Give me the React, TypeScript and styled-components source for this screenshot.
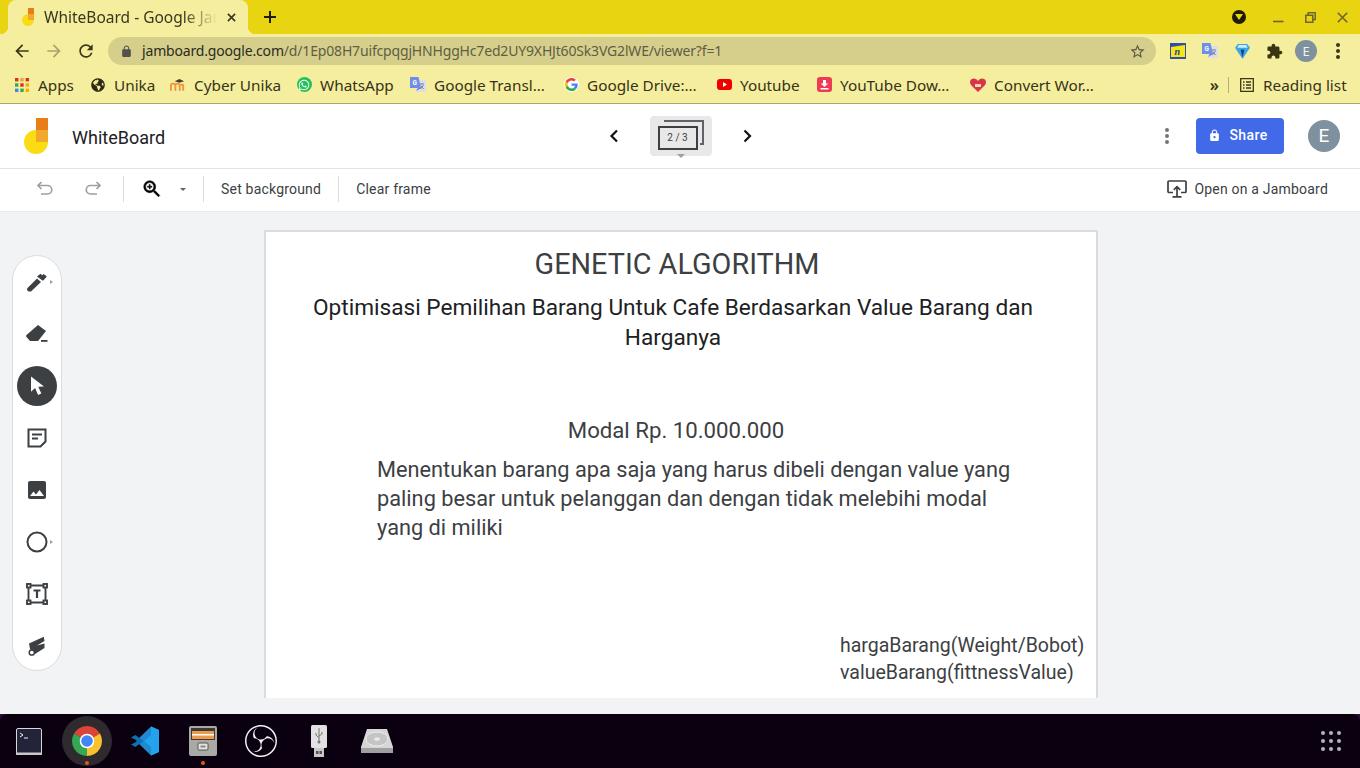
import React from 'react'
import styled, { createGlobalStyle } from 'styled-components'
import { FaGlobeAmericas, FaWhatsapp } from 'react-icons/fa'
import { SiObsstudio } from 'react-icons/si'

const GlobalStyle = createGlobalStyle`
  html, body { margin: 0; padding: 0; background: #f1f3f4; }
  body { width: 1360px; height: 768px; overflow: hidden; font-family: Roboto, "Liberation Sans", sans-serif; }
`

const CHROME_FONT = `"Noto Sans", "Open Sans", sans-serif`

const bookmarks = [
  { label: 'Apps', width: 36, icon: <AppsIcon /> },
  { label: 'Unika', width: 40, icon: <FaGlobeAmericas size={14} color="#2e2a14" /> },
  { label: 'Cyber Unika', width: 86, icon: <MoodleIcon /> },
  { label: 'WhatsApp', width: 74, icon: <WhatsappIcon /> },
  { label: 'Google Transl…', width: 113, icon: <TranslateIcon size={16} /> },
  { label: 'Google Drive:…', width: 113, icon: <GoogleIcon /> },
  { label: 'Youtube', width: 60, icon: <YoutubeIcon /> },
  { label: 'YouTube Dow…', width: 114, icon: <DownloadIcon /> },
  { label: 'Convert Wor…', width: 106, icon: <GiftIcon /> },
]

export default function App() {
  return (
    <Page>
      <GlobalStyle />
      <TabStrip>
        <Tab>
          <JamLogo size={12} />
          <TabTitle>WhiteBoard - Google Jamboard</TabTitle>
          <TabClose viewBox="0 0 10 10"><path d="M1 1l8 8M9 1l-8 8" /></TabClose>
        </Tab>
        <NewTab viewBox="0 0 12 12"><path d="M6 0v12M0 6h12" /></NewTab>
        <WindowControls>
          <ProfileDot><svg width="8" height="6" viewBox="0 0 8 6"><path d="M0 0h8L4 6z" fill="#e9d411" /></svg></ProfileDot>
          <WindowButton>
            <svg width="11" height="11" viewBox="0 0 11 11"><path d="M0 9.5h10.5" stroke="#6b6530" strokeWidth="1.6" /></svg>
          </WindowButton>
          <WindowButton>
            <svg width="11" height="11" viewBox="0 0 11 11" fill="none" stroke="#6b6530" strokeWidth="1.5"><path d="M3.2 3V.8h7v6.6H8" /><path d="M.8 3.2h7v7h-7z" /></svg>
          </WindowButton>
          <WindowButton>
            <svg width="11" height="11" viewBox="0 0 11 11"><path d="M.8.8l9.4 9.4M10.2.8L.8 10.2" stroke="#6b6530" strokeWidth="1.6" /></svg>
          </WindowButton>
        </WindowControls>
      </TabStrip>

      <NavBar>
        <NavButton><Icon d="M20 11H7.83l5.59-5.59L12 4l-8 8 8 8 1.41-1.41L7.83 13H20v-2z" color="#3b3718" size={20} /></NavButton>
        <NavButton><Icon d="M12 4l-1.41 1.41L16.17 11H4v2h12.17l-5.58 5.59L12 20l8-8z" color="#a8a36f" size={20} /></NavButton>
        <NavButton><Icon d="M17.65 6.35A7.958 7.958 0 0 0 12 4c-4.42 0-7.99 3.58-7.99 8s3.57 8 7.99 8c3.73 0 6.84-2.55 7.73-6h-2.08A5.99 5.99 0 0 1 12 18c-3.31 0-6-2.69-6-6s2.69-6 6-6c1.66 0 3.14.69 4.22 1.78L13 11h7V4l-2.35 2.35z" color="#3b3718" size={20} /></NavButton>
        <Omnibox>
          <Icon d="M18 8h-1V6c0-2.76-2.24-5-5-5S7 3.24 7 6v2H6c-1.1 0-2 .9-2 2v10c0 1.1.9 2 2 2h12c1.1 0 2-.9 2-2V10c0-1.1-.9-2-2-2zm-6-5.1c1.71 0 3.1 1.39 3.1 3.1v2H8.9V6c0-1.71 1.39-3.1 3.1-3.1z" color="#55524a" size={13} />
          <UrlText><b>jamboard.google.com</b>/d/1Ep08H7uifcpqgjHNHggHc7ed2UY9XHJt60Sk3VG2lWE/viewer?f=1</UrlText>
          <StarSlot>
            <Icon d="M22 9.24l-7.19-.62L12 2 9.19 8.63 2 9.24l5.46 4.73L5.82 21 12 17.27 18.18 21l-1.63-7.03L22 9.24zM12 15.4l-3.76 2.27 1-4.28-3.32-2.88 4.38-.38L12 6.1l1.71 4.04 4.38.38-3.32 2.88 1 4.28L12 15.4z" color="#5c5a42" size={17} />
          </StarSlot>
        </Omnibox>
        <Extensions>
          <NavButton><NoteExtension /></NavButton>
          <NavButton><TranslateIcon size={16} /></NavButton>
          <NavButton><DiamondIcon /></NavButton>
          <NavButton><Icon d="M20.5 11H19V7c0-1.1-.9-2-2-2h-4V3.5C13 2.12 11.88 1 10.5 1S8 2.12 8 3.5V5H4c-1.1 0-1.99.9-1.99 2v3.8H3.5c1.49 0 2.7 1.21 2.7 2.7s-1.21 2.7-2.7 2.7H2V20c0 1.1.9 2 2 2h3.8v-1.5c0-1.49 1.21-2.7 2.7-2.7 1.49 0 2.7 1.21 2.7 2.7V22H17c1.1 0 2-.9 2-2v-4h1.5c1.38 0 2.5-1.12 2.5-2.5S21.88 11 20.5 11z" color="#3b3410" size={17} /></NavButton>
          <NavButton><SmallAvatar>E</SmallAvatar></NavButton>
          <NavButton><Kebab $color="#3b3718" /></NavButton>
        </Extensions>
      </NavBar>

      <BookmarkBar>
        {bookmarks.map(b => (
          <Bookmark key={b.label}>
            <BookmarkIcon>{b.icon}</BookmarkIcon>
            <BookmarkLabel $width={b.width}>{b.label}</BookmarkLabel>
          </Bookmark>
        ))}
        <Overflow>»</Overflow>
        <BarDivider />
        <ReadingList>
          <svg width="14" height="14" viewBox="0 0 14 14" fill="none" stroke="#3b3718" strokeWidth="1.3"><path d="M.7.7h12.6v12.6H.7zM3 4h1.5M6 4h5M3 7h1.5M6 7h5M3 10h1.5M6 10h5" /></svg>
          <BookmarkLabel $width={83}>Reading list</BookmarkLabel>
        </ReadingList>
      </BookmarkBar>

      <AppHeader>
        <Brand>
          <JamLogo size={24} />
          <DocTitle>WhiteBoard</DocTitle>
        </Brand>
        <FrameNav>
          <ChevronIcon direction="left" />
          <FrameButton>
            <FrameBack />
            <FrameFront>2 / 3</FrameFront>
            <FrameCaret />
          </FrameButton>
          <ChevronIcon direction="right" />
        </FrameNav>
        <HeaderActions>
          <Kebab $color="#757575" />
          <ShareButton>
            <Icon d="M18 8h-1V6c0-2.76-2.24-5-5-5S7 3.24 7 6v2H6c-1.1 0-2 .9-2 2v10c0 1.1.9 2 2 2h12c1.1 0 2-.9 2-2V10c0-1.1-.9-2-2-2zm-6 9c-1.1 0-2-.9-2-2s.9-2 2-2 2 .9 2 2-.9 2-2 2zm3.1-9H8.9V6c0-1.71 1.39-3.1 3.1-3.1 1.71 0 3.1 1.39 3.1 3.1v2z" color="#ffffff" size={13} />
            Share
          </ShareButton>
          <UserAvatar>E</UserAvatar>
        </HeaderActions>
      </AppHeader>

      <ActionBar>
        <ActionCell $width={48}>
          <svg width="20" height="20" viewBox="0 0 20 20" fill="none" stroke="#9aa0a6" strokeWidth="1.7"><path d="M6.5 3L3 6.5 6.5 10M3 6.5h9.5a3.8 3.8 0 0 1 0 8.5H6" /></svg>
        </ActionCell>
        <ActionCell $width={48}>
          <svg width="20" height="20" viewBox="0 0 20 20" fill="none" stroke="#9aa0a6" strokeWidth="1.7"><path d="M13.5 3L17 6.5 13.5 10M17 6.5H7.5a3.8 3.8 0 0 0 0 8.5H14" /></svg>
        </ActionCell>
        <ActionDivider $gap={6} />
        <ZoomGroup>
          <svg width="22" height="22" viewBox="0 0 24 24" fill="#000" stroke="#000" strokeWidth=".6"><path d="M15.5 14h-.79l-.28-.27A6.471 6.471 0 0 0 16 9.5 6.5 6.5 0 1 0 9.5 16c1.61 0 3.09-.59 4.23-1.57l.27.28v.79l5 4.99L20.49 19l-4.99-5zm-6 0C7.01 14 5 11.99 5 9.5S7.01 5 9.5 5 14 7.01 14 9.5 11.99 14 9.5 14z" /><path d="M12 10h-2v2H9v-2H7V9h2V7h1v2h2v1z" /></svg>
          <SmallCaret />
        </ZoomGroup>
        <ActionDivider $gap={0} />
        <ActionLabel>Set background</ActionLabel>
        <ActionDivider $gap={0} />
        <ActionLabel>Clear frame</ActionLabel>
        <OpenOnJamboard>
          <svg width="20" height="18" viewBox="0 0 20 18" fill="none" stroke="#3c4043" strokeWidth="1.7"><path d="M6 12.5H2a1 1 0 0 1-1-1V2a1 1 0 0 1 1-1h16a1 1 0 0 1 1 1v9.5a1 1 0 0 1-1 1h-4" /><path d="M10 16V7M6.8 9.8L10 6.6l3.2 3.2M5.5 16.8h9" /></svg>
          Open on a Jamboard
        </OpenOnJamboard>
      </ActionBar>

      <Workspace>
        <ToolRail>
          <Tool><PenIcon /><ToolArrow /></Tool>
          <Tool><EraserIcon /></Tool>
          <Tool>
            <ActiveTool>
              <svg width="18" height="20" viewBox="0 0 18 20"><path d="M2 .5v15.2l4.1-3.7 3 7 3.2-1.4-3-6.8 5.7-.4z" fill="#fff" /></svg>
            </ActiveTool>
          </Tool>
          <Tool>
            <svg width="20" height="20" viewBox="0 0 20 20" fill="none" stroke="#3c4043" strokeWidth="2"><path d="M1.5 1.5h17v12l-5 5h-12z" /><path d="M5 6.5h10M5 10.5h6" /></svg>
          </Tool>
          <Tool><Icon d="M21 19V5c0-1.1-.9-2-2-2H5c-1.1 0-2 .9-2 2v14c0 1.1.9 2 2 2h14c1.1 0 2-.9 2-2zM8.5 13.5l2.5 3.01L14.5 12l4.5 6H5l3.5-4.5z" color="#3c4043" size={24} /></Tool>
          <Tool>
            <svg width="22" height="22" viewBox="0 0 22 22" fill="none" stroke="#3c4043" strokeWidth="2"><circle cx="11" cy="11" r="9.5" /></svg>
            <ToolArrow />
          </Tool>
          <Tool><TextBoxIcon /></Tool>
          <Tool><LaserIcon /></Tool>
        </ToolRail>

        <Board>
          <BoardTitle>GENETIC ALGORITHM</BoardTitle>
          <BoardSubtitle>Optimisasi Pemilihan Barang Untuk Cafe Berdasarkan Value Barang dan Harganya</BoardSubtitle>
          <ModalText>Modal Rp. 10.000.000</ModalText>
          <BodyText>Menentukan barang apa saja yang harus dibeli dengan value yang paling besar untuk pelanggan dan dengan tidak melebihi modal yang di miliki</BodyText>
          <LegendText>hargaBarang(Weight/Bobot)<br />valueBarang(fittnessValue)</LegendText>
        </Board>
      </Workspace>

      <DockBackdrop>
        <Dock>
          <DockItem><TerminalIcon /></DockItem>
          <DockItem $active $running><ChromeIcon /></DockItem>
          <DockItem><VsCodeIcon /></DockItem>
          <DockItem $running><FilesIcon /></DockItem>
          <DockItem><SiObsstudio size={32} color="#f4f4f4" /></DockItem>
          <DockItem><UsbIcon /></DockItem>
          <DockItem><DiskIcon /></DockItem>
          <GridDots>
            {Array.from({ length: 9 }).map((_, i) => <GridDot key={i} />)}
          </GridDots>
        </Dock>
      </DockBackdrop>
    </Page>
  )
}

function Icon({ d, color, size }: { d: string; color: string; size: number }) {
  return <svg width={size} height={size} viewBox="0 0 24 24" fill={color} style={{ flexShrink: 0 }}><path d={d} /></svg>
}

function JamLogo({ size }: { size: number }) {
  return (
    <svg width={size} height={size * 1.5} viewBox="0 0 24 36" style={{ flexShrink: 0 }}>
      <circle cx="12" cy="24" r="12" fill="#fbdb14" />
      <rect x="12" y="0" width="12" height="12" fill="#e97d17" />
      <rect x="12" y="12" width="12" height="12" fill="#f0a92b" />
    </svg>
  )
}

function AppsIcon() {
  const colors = ['#d93025', '#e8a33d', '#d93025', '#34a853', '#d93025', '#f9ab00', '#4285f4', '#34a853', '#f9ab00']
  return (
    <svg width="14" height="14" viewBox="0 0 14 14">
      {colors.map((c, i) => <rect key={i} x={(i % 3) * 5.3} y={Math.floor(i / 3) * 5.3} width="3.4" height="3.4" fill={c} />)}
    </svg>
  )
}

function MoodleIcon() {
  return (
    <svg width="17" height="14" viewBox="0 0 17 14">
      <path d="M5 3l5-2.5L15 3l-5 1.5z" fill="#4a3b28" />
      <path d="M1 13V7.5C1 6 2 5.5 3 5.5s2.400.5 2.700 2V13M5.700 13V7.500c0-1.500 1-2 2.300-2s2.300.5 2.300 2V13" fill="none" stroke="#f0963c" strokeWidth="2" />
      <path d="M10.3 7c.5-1.5 4-2 4.700 0v6h-2V8" fill="#f0963c" />
    </svg>
  )
}

function WhatsappIcon() {
  return <WhatsappCircle><FaWhatsapp size={12} color="#fff" /></WhatsappCircle>
}

function TranslateIcon({ size }: { size: number }) {
  return (
    <svg width={size} height={size} viewBox="0 0 16 16">
      <rect x="6" y="3" width="10" height="12" fill="#dcdfe8" />
      <path d="M10 7h4M12 6v1M10.5 12l3-4M10.7 8.5l3 3.5" stroke="#7d8597" strokeWidth="1" fill="none" />
      <path d="M0 0h8.5L11 11H0z" fill="#6f8ee8" />
      <path d="M6 14l2-3h3z" fill="#6f6fc8" />
      <text x="2.5" y="8" fontSize="6.5" fontWeight="700" fontFamily="Roboto, sans-serif" fill="#fff">G</text>
    </svg>
  )
}

function GoogleIcon() {
  return (
    <GoogleCircle>
      <svg width="13" height="13" viewBox="0 0 48 48">
        <path fill="#ea4335" d="M24 9.5c3.5 0 6.7 1.3 9.2 3.5l6.800-6.800C35.900 2.400 30.500 0 24 0 14.600 0 6.500 5.400 2.600 13.200l8 6.200C12.400 13.700 17.700 9.500 24 9.500z" />
        <path fill="#4285f4" d="M47 24.5c0-1.600-.1-3.100-.4-4.500H24v9h13c-.6 3-2.200 5.500-4.700 7.200l7.300 5.700C44.100 37.700 47 31.700 47 24.500z" />
        <path fill="#fbbc05" d="M10.5 28.600c-.5-1.500-.8-3-.8-4.600s.3-3.200.8-4.600l-8-6.200C.9 16.500 0 20.100 0 24s.9 7.500 2.600 10.800z" />
        <path fill="#34a853" d="M24 48c6.500 0 11.900-2.100 15.900-5.800l-7.700-6c-2.100 1.400-4.900 2.300-8.200 2.300-6.300 0-11.600-4.200-13.500-9.900l-8 6.200C6.500 42.600 14.600 48 24 48z" />
      </svg>
    </GoogleCircle>
  )
}

function YoutubeIcon() {
  return (
    <svg width="15" height="11" viewBox="0 0 15 11">
      <rect width="15" height="11" rx="3" fill="#f00000" />
      <path d="M6 3l4 2.5L6 8z" fill="#fff" />
    </svg>
  )
}

function DownloadIcon() {
  return (
    <svg width="15" height="15" viewBox="0 0 15 15">
      <rect width="15" height="15" rx="3" fill="#ee3a54" />
      <path d="M6 3h3v3.5h2.200L7.500 10 3.800 6.500H6zM3.500 11h8v1.500h-8z" fill="#fff" />
    </svg>
  )
}

function GiftIcon() {
  return (
    <svg width="16" height="14" viewBox="0 0 16 14">
      <path d="M8 14L1 7C-.5 5-.2 2.300 1.500 1.200 3.500 0 6 .5 8 3c2-2.500 4.500-3 6.500-1.800C16.200 2.300 16.500 5 15 7z" fill="#d9344a" />
      <path d="M5 6h6v3H5z" fill="#f7d7a8" />
    </svg>
  )
}

function NoteExtension() {
  return (
    <svg width="16" height="16" viewBox="0 0 16 16">
      <rect width="16" height="16" fill="#2f4fa8" />
      <path d="M1 4l14-2v12H1z" fill="#f6e617" />
      <text x="4.5" y="12" fontSize="10" fontStyle="italic" fontWeight="700" fontFamily="'Liberation Serif', serif" fill="#2440a0">n</text>
    </svg>
  )
}

function DiamondIcon() {
  return (
    <svg width="15" height="15" viewBox="0 0 16 16">
      <path d="M3 0h10l3 4-8 12L0 4z" fill="#3aa6ea" />
      <path d="M4 1h8l1.5 3h-11z" fill="#cfeefc" />
      <path d="M6 6h4l-2 8z" fill="#12406e" />
    </svg>
  )
}

function ChevronIcon({ direction }: { direction: 'left' | 'right' }) {
  const d = direction === 'left' ? 'M8 1.5L2.5 7 8 12.5' : 'M2.5 1.5L8 7 2.5 12.5'
  return <svg width="11" height="14" viewBox="0 0 11 14" fill="none" stroke="#111" strokeWidth="2.2"><path d={d} /></svg>
}

function PenIcon() {
  return (
    <svg width="21" height="19" viewBox="0 0 21 19" fill="#3c4043">
      <path d="M0 15.5L10 5.500l4 3.500L4 18.500H1.500L0 17z" />
      <path d="M10 3.500L13.500 .8l1.700 1.400 1.600-1.300 3 2.500-3 3.500-1 .8z" />
    </svg>
  )
}

function EraserIcon() {
  return (
    <svg width="22" height="18" viewBox="0 0 22 18" fill="#3c4043">
      <path d="M12 0l8 6-8 10H4l-3.500-4a1.500 1.500 0 0 1 0-2z" />
      <path d="M15 15h6.500v1.800H15z" />
    </svg>
  )
}

function TextBoxIcon() {
  return (
    <svg width="22" height="22" viewBox="0 0 22 22" fill="none" stroke="#3c4043" strokeWidth="1.9">
      <path d="M4 2.5h14M4 19.500h14M2.500 4v14M19.500 4v14" />
      <rect x="1" y="1" width="3.5" height="3.5" />
      <rect x="17.5" y="1" width="3.5" height="3.5" />
      <rect x="1" y="17.5" width="3.5" height="3.5" />
      <rect x="17.5" y="17.5" width="3.5" height="3.5" />
      <path d="M7.5 7.5h7M11 7.500v7.500" strokeWidth="2.2" />
    </svg>
  )
}

function LaserIcon() {
  return (
    <svg width="18" height="20" viewBox="0 0 18 20">
      <path d="M1 7.500L15.800 .7l.7 4.300L9 9.500l7.500-2v4.500L7 18l-5-5z" fill="#3c4043" />
      <circle cx="3.8" cy="16.5" r="2.6" fill="#fff" stroke="#3c4043" strokeWidth="1.5" />
    </svg>
  )
}

function TerminalIcon() {
  return (
    <svg width="26" height="27" viewBox="0 0 26 27">
      <rect x=".5" y=".5" width="25" height="26" rx="1.5" fill="#23233a" stroke="#d8d8d8" />
      <rect x="0" y="24.5" width="26" height="2.5" fill="#c8c8c8" />
      <path d="M4 5l3 2-3 2" fill="none" stroke="#f4f4f4" strokeWidth="1" />
      <path d="M8 10h4" stroke="#f4f4f4" strokeWidth="1" />
    </svg>
  )
}

function ChromeIcon() {
  return (
    <svg width="30" height="30" viewBox="0 0 30 30">
      <path d="M15 15L2.010 7.500A15 15 0 0 1 27.990 7.500z" fill="#db4437" />
      <path d="M15 15L27.990 7.500A15 15 0 0 1 15 30z" fill="#fbc02d" />
      <path d="M15 15L15 30A15 15 0 0 1 2.010 7.500z" fill="#34a853" />
      <circle cx="15" cy="15" r="7.3" fill="#fff" />
      <circle cx="15" cy="15" r="5.8" fill="#4285f4" />
    </svg>
  )
}

function VsCodeIcon() {
  return (
    <svg width="30" height="30" viewBox="0 0 30 30">
      <path d="M21 .5L29 4v22l-8 3.500L6 15z" fill="#1f8ad2" />
      <path d="M21 .5L29 4v22l-8 3.500V21l-7-6 7-6z" fill="#23a3ee" />
      <path d="M21 9L5.500 21 1 18.500 8 15 1 11.500 5.500 9l8 6z" fill="#0f6fb5" />
    </svg>
  )
}

function FilesIcon() {
  return (
    <svg width="28" height="30" viewBox="0 0 28 30">
      <rect width="28" height="30" rx="2" fill="#a9a9a5" />
      <rect x="2" y="2" width="24" height="12" fill="#3a3a38" />
      <rect x="3" y="5" width="22" height="8" fill="#ee9a4d" />
      <rect x="3" y="8" width="22" height="1.5" fill="#fff" />
      <rect x="9" y="17" width="10" height="7" rx="1" fill="#e4e4e2" stroke="#55554f" />
      <rect x="11.5" y="19.5" width="5" height="2" fill="#8a8a86" />
    </svg>
  )
}

function UsbIcon() {
  return (
    <svg width="16" height="32" viewBox="0 0 16 32">
      <rect x="3" y="21" width="10" height="11" fill="#c9c9c9" />
      <rect x="5" y="26" width="2.5" height="3" fill="#555" />
      <rect x="8.5" y="26" width="2.5" height="3" fill="#555" />
      <rect width="16" height="23" rx="1.5" fill="#e2e2e2" />
      <path d="M8 3v14M8 13L5 10V8M8 11l3-2V7" fill="none" stroke="#777" strokeWidth="1" />
      <circle cx="8" cy="17" r="1.5" fill="#777" />
    </svg>
  )
}

function DiskIcon() {
  return (
    <svg width="32" height="26" viewBox="0 0 32 26">
      <path d="M6 1h20l6 18v6H0v-6z" fill="#d6d6d6" />
      <rect y="20" width="32" height="5" fill="#a0a0a0" />
      <ellipse cx="16" cy="11" rx="11" ry="7" fill="#c4c4c4" stroke="#ededed" />
      <ellipse cx="16" cy="11" rx="3" ry="1.8" fill="#e8e8e8" />
    </svg>
  )
}

const Page = styled.div`
  display: flex;
  flex-direction: column;
  width: 1360px;
  height: 768px;
  overflow: hidden;
  background: #f1f3f4;
`

const TabStrip = styled.div`
  display: flex;
  align-items: center;
  flex-shrink: 0;
  height: 34px;
  padding-left: 8px;
  background: #e9d411;
`

const Tab = styled.div`
  position: relative;
  display: flex;
  align-items: center;
  align-self: flex-end;
  box-sizing: border-box;
  width: 240px;
  height: 34px;
  padding: 0 12px 0 14px;
  gap: 10px;
  background: #f5ee9e;
  border-radius: 8px 8px 0 0;

  &::before, &::after {
    content: '';
    position: absolute;
    bottom: 0;
    width: 8px;
    height: 8px;
    background: radial-gradient(circle at var(--cx) 0, #e9d411 8px, #f5ee9e 8.5px);
  }
  &::before { left: -8px; --cx: 0; }
  &::after { right: -8px; --cx: 100%; }
`

const TabTitle = styled.span`
  flex: 1;
  overflow: hidden;
  white-space: nowrap;
  font: 15.5px ${CHROME_FONT};
  color: #3a3620;
  -webkit-mask-image: linear-gradient(to right, #000 80%, transparent 100%);
  mask-image: linear-gradient(to right, #000 80%, transparent 100%);
`

const TabClose = styled.svg`
  width: 9px;
  height: 9px;
  fill: none;
  stroke: #3a3620;
  stroke-width: 1.8;
`

const NewTab = styled.svg`
  width: 12px;
  height: 12px;
  margin-left: 16px;
  fill: none;
  stroke: #1f1c05;
  stroke-width: 2;
`

const WindowControls = styled.div`
  display: flex;
  align-items: center;
  margin-left: auto;
  height: 100%;
`

const ProfileDot = styled.div`
  display: flex;
  align-items: center;
  justify-content: center;
  width: 14px;
  height: 14px;
  margin-right: 16px;
  border-radius: 50%;
  background: #1f1a05;
`

const WindowButton = styled.div`
  display: flex;
  align-items: center;
  justify-content: center;
  width: 32px;
  height: 100%;
  &:last-child { margin-right: 2px; }
`

const NavBar = styled.div`
  display: flex;
  align-items: center;
  flex-shrink: 0;
  height: 34px;
  padding: 0 6px;
  background: #f5ee9e;
`

const NavButton = styled.div`
  display: flex;
  align-items: center;
  justify-content: center;
  width: 32px;
  height: 32px;
  flex-shrink: 0;
`

const Omnibox = styled.div`
  display: flex;
  align-items: center;
  flex: 1;
  height: 28px;
  margin: 0 6px;
  padding: 0 10px 0 12px;
  gap: 9px;
  border-radius: 14px;
  background: #d6cf8b;
`

const UrlText = styled.span`
  flex: 1;
  padding-bottom: 1px;
  font: 14px ${CHROME_FONT};
  letter-spacing: -.17px;
  color: #5f5d45;
  white-space: nowrap;
  b { font-weight: 400; color: #2b2a1c; }
`

const StarSlot = styled.span`
  display: flex;
`

const Extensions = styled.div`
  display: flex;
`

const SmallAvatar = styled.div`
  width: 22px;
  height: 22px;
  border-radius: 50%;
  background: #7f919f;
  color: #f4f4f4;
  font: 13px/22px ${CHROME_FONT};
  text-align: center;
`

const Kebab = styled.span<{ $color: string }>`
  display: block;
  width: 4px;
  height: 4px;
  border-radius: 50%;
  background: ${p => p.$color};
  box-shadow: 0 -6px 0 ${p => p.$color}, 0 6px 0 ${p => p.$color};
`

const BookmarkBar = styled.div`
  display: flex;
  align-items: center;
  flex-shrink: 0;
  box-sizing: border-box;
  height: 36px;
  padding: 0 14px 2px 14px;
  gap: 16px;
  background: #f5ee9e;
  border-bottom: 1px solid #aaa56e;
`

const Bookmark = styled.div`
  display: flex;
  align-items: center;
  gap: 8px;
`

const BookmarkIcon = styled.span`
  display: flex;
  align-items: center;
  justify-content: center;
  width: 16px;
`

const BookmarkLabel = styled.span<{ $width: number }>`
  width: ${p => p.$width}px;
  font: 15.3px ${CHROME_FONT};
  color: #36331a;
  white-space: nowrap;
`

const WhatsappCircle = styled.span`
  display: flex;
  align-items: center;
  justify-content: center;
  width: 15px;
  height: 15px;
  border-radius: 50%;
  background: #25c25a;
`

const GoogleCircle = styled.span`
  display: flex;
  align-items: center;
  justify-content: center;
  width: 15px;
  height: 15px;
  border-radius: 50%;
  background: #fff;
`

const Overflow = styled.span`
  margin-left: auto;
  font: 600 16px ${CHROME_FONT};
  color: #3b3718;
`

const BarDivider = styled.span`
  width: 1px;
  height: 16px;
  margin: 0 -5px 0 -7px;
  background: #b4af78;
`

const ReadingList = styled.div`
  display: flex;
  align-items: center;
  gap: 9px;
`

const AppHeader = styled.header`
  display: grid;
  grid-template-columns: 1fr auto 1fr;
  align-items: center;
  flex-shrink: 0;
  box-sizing: border-box;
  height: 65px;
  padding: 0 20px 0 24px;
  background: #fff;
  border-bottom: 1px solid #e3e3e3;
`

const Brand = styled.div`
  display: flex;
  align-items: center;
  gap: 24px;
`

const DocTitle = styled.span`
  margin-top: 2px;
  font-size: 18px;
  color: #202124;
`

const FrameNav = styled.div`
  display: flex;
  align-items: center;
  gap: 30px;
  margin-right: 3px;
`

const FrameButton = styled.div`
  position: relative;
  width: 62px;
  height: 40px;
  border-radius: 4px;
  background: #e8e8e8;
`

const FrameBack = styled.span`
  position: absolute;
  left: 14px;
  top: 4px;
  width: 38px;
  height: 21px;
  border: solid #5f6368;
  border-width: 2px 2px 0 0;
  &::after {
    content: '';
    position: absolute;
    right: -2px;
    bottom: -2px;
    width: 4px;
    height: 2px;
    background: #5f6368;
  }
`

const FrameFront = styled.span`
  position: absolute;
  left: 8px;
  top: 10px;
  box-sizing: border-box;
  width: 40px;
  height: 24px;
  border: 2px solid #3c4043;
  background: #e8e8e8;
  font-size: 10px;
  line-height: 20px;
  text-align: center;
  color: #3c4043;
`

const FrameCaret = styled.span`
  position: absolute;
  left: 27px;
  bottom: -2px;
  border: solid transparent;
  border-width: 4px 4px 0;
  border-top-color: #9aa0a6;
`

const HeaderActions = styled.div`
  display: flex;
  align-items: center;
  justify-content: flex-end;
`

const ShareButton = styled.div`
  display: flex;
  align-items: center;
  justify-content: center;
  box-sizing: border-box;
  gap: 8px;
  width: 88px;
  height: 36px;
  margin-left: 27px;
  padding: 0 4px 2px 0;
  border-radius: 4px;
  background: #4169e8;
  color: #fff;
  font-size: 14px;
  font-weight: 500;
  letter-spacing: .4px;
`

const UserAvatar = styled.div`
  width: 32px;
  height: 32px;
  margin-left: 24px;
  border-radius: 50%;
  background: #7f919f;
  color: #fff;
  font-size: 19px;
  line-height: 32px;
  text-align: center;
`

const ActionBar = styled.div`
  display: flex;
  align-items: center;
  flex-shrink: 0;
  box-sizing: border-box;
  height: 43px;
  padding: 0 32px 2px 21px;
  background: #fff;
  border-bottom: 1px solid #e8eaed;
`

const ActionCell = styled.div<{ $width: number }>`
  display: flex;
  align-items: center;
  justify-content: center;
  width: ${p => p.$width}px;
`

const ActionDivider = styled.span<{ $gap: number }>`
  width: 1px;
  height: 26px;
  margin-left: ${p => p.$gap}px;
  background: #dadce0;
`

const ZoomGroup = styled.div`
  display: flex;
  align-items: center;
  width: 79px;
  padding-left: 17px;
  box-sizing: border-box;
  gap: 17px;
`

const SmallCaret = styled.span`
  border: solid transparent;
  border-width: 3px 3px 0;
  border-top-color: #5f6368;
`

const ActionLabel = styled.span`
  padding: 0 17px;
  font-size: 14px;
  letter-spacing: .2px;
  color: #3c4043;
`

const OpenOnJamboard = styled.div`
  display: flex;
  align-items: center;
  gap: 7px;
  margin-left: auto;
  font-size: 14px;
  letter-spacing: .2px;
  color: #3c4043;
`

const Workspace = styled.main`
  display: flex;
  align-items: flex-start;
  flex-shrink: 0;
  height: 486px;
  padding-left: 12px;
  overflow: hidden;
  background: #f1f3f4;
`

const ToolRail = styled.nav`
  display: flex;
  flex-direction: column;
  flex-shrink: 0;
  box-sizing: border-box;
  width: 50px;
  height: 416px;
  margin-top: 43px;
  background: #fff;
  border: 1px solid #dadce0;
  border-radius: 25px;
`

const Tool = styled.div`
  position: relative;
  display: flex;
  flex-shrink: 0;
  align-items: center;
  justify-content: center;
  height: 52px;
`

const ToolArrow = styled.span`
  position: absolute;
  left: 37px;
  top: 24px;
  border: solid transparent;
  border-width: 2.5px 0 2.5px 3.5px;
  border-left-color: #9aa0a6;
`

const ActiveTool = styled.div`
  display: flex;
  align-items: center;
  justify-content: center;
  width: 40px;
  height: 40px;
  padding-left: 2px;
  box-sizing: border-box;
  border-radius: 50%;
  background: #3c4043;
`

const Board = styled.section`
  position: relative;
  flex-shrink: 0;
  box-sizing: border-box;
  width: 834px;
  height: 520px;
  margin: 18px 0 0 202px;
  background: #fff;
  border: 2px solid #dadce0;
  color: #3c4043;
`

/* text boxes sit where the user dropped them on the frame */
const BoardTitle = styled.div`
  position: absolute;
  left: 0;
  right: 0;
  top: 14px;
  padding-right: 8px;
  font-size: 28.8px;
  line-height: 36px;
  text-align: center;
`

const BoardSubtitle = styled.div`
  position: absolute;
  left: 39px;
  width: 736px;
  top: 61px;
  font-size: 22.63px;
  line-height: 30px;
  text-align: center;
  color: #202124;
`

const ModalText = styled.div`
  position: absolute;
  left: 0;
  right: 0;
  top: 183px;
  padding-right: 10px;
  font-size: 22.2px;
  line-height: 30px;
  text-align: center;
`

const BodyText = styled.div`
  position: absolute;
  left: 111px;
  top: 223px;
  width: 660px;
  font-size: 21.75px;
  line-height: 29px;
`

const LegendText = styled.div`
  position: absolute;
  left: 574px;
  top: 400px;
  width: 258px;
  font-size: 19.5px;
  line-height: 27px;
`

const DockBackdrop = styled.div`
  flex-shrink: 0;
  height: 54px;
  margin-top: 16px;
  background: #2c0a3a;
`

const Dock = styled.footer`
  display: flex;
  align-items: center;
  height: 54px;
  background: #0b0010;
  border-radius: 8px 8px 0 0;
`

const DockItem = styled.div<{ $active?: boolean; $running?: boolean }>`
  position: relative;
  display: flex;
  align-items: center;
  justify-content: center;
  width: 58px;
  height: 54px;
  z-index: 0;

  ${p => p.$active && `
    &::before {
      content: '';
      position: absolute;
      z-index: -1;
      left: 4px;
      top: 2px;
      width: 50px;
      height: 50px;
      border-radius: 50%;
      background: #2e2a2e;
    }
  `}
  ${p => p.$running && `
    &::after {
      content: '';
      position: absolute;
      left: 27px;
      bottom: 3px;
      width: 4px;
      height: 4px;
      border-radius: 50%;
      background: #e95420;
    }
  `}
`

const GridDots = styled.div`
  display: grid;
  grid-template-columns: repeat(3, 4px);
  grid-auto-rows: 4px;
  gap: 4px;
  margin-left: auto;
  margin-right: 19px;
`

const GridDot = styled.span`
  border-radius: 50%;
  background: #b9b4ba;
`
